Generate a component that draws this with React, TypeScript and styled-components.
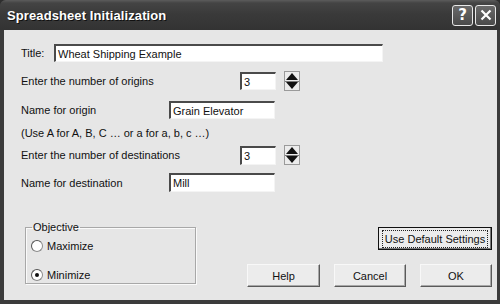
import React from 'react'
import styled, { createGlobalStyle } from 'styled-components'

const Global = createGlobalStyle`
	html, body {
		margin: 0;
		padding: 0;
		background: #2e2e2e;
	}
	* {
		box-sizing: border-box;
	}
`

const Frame = styled.div`
	width: 500px;
	height: 304px;
	display: flex;
	flex-direction: column;
	background: #3b3b3b;
	border-radius: 6px 6px 0 0;
	overflow: hidden;
	font-family: 'Liberation Sans', Arial, sans-serif;
	font-size: 11px;
	color: #111;
`

const TitleBar = styled.div`
	height: 30px;
	display: flex;
	align-items: center;
	padding: 0 4px 0 7px;
	background: linear-gradient(#5c5c5c 0px, #444 3px, #3a3a3a 14px, #333 30px);
`

const TitleText = styled.div`
	flex: 1;
	color: #fff;
	font-family: 'Liberation Sans', Arial, sans-serif;
	font-weight: bold;
	font-size: 13px;
	letter-spacing: 0.1px;
	text-shadow: 1px 1px 0 #111;
`

const CaptionButton = styled.div`
	width: 21px;
	height: 21px;
	margin-left: 2px;
	display: flex;
	align-items: center;
	justify-content: center;
	border: 1px solid #e8e8e8;
	border-radius: 3px;
	background: linear-gradient(#6a6a6a, #4a4a4a);
	color: #fff;
	font-family: 'DejaVu Sans', sans-serif;
	font-size: 15px;
	font-weight: bold;
`

const Client = styled.div`
	flex: 1;
	margin: 0 3px 4px 4px;
	background: #e6e6e6;
	padding: 14px 0 0 17px;
	display: flex;
	flex-direction: column;
`

const Row = styled.div<{ $top: number }>`
	display: flex;
	align-items: center;
	margin-top: ${p => p.$top}px;
`

const Label = styled.div<{ $w?: number }>`
	width: ${p => (p.$w ? `${p.$w}px` : 'auto')};
	white-space: nowrap;
`

const TextBox = styled.div<{ $w: number; $h?: number }>`
	width: ${p => p.$w}px;
	height: ${p => p.$h ?? 18}px;
	background: #fff;
	border-top: 2px solid #4a4a4a;
	border-left: 2px solid #4a4a4a;
	border-right: 1px solid #f4f4f4;
	border-bottom: 1px solid #f4f4f4;
	padding-left: 2px;
	display: flex;
	align-items: center;
	white-space: nowrap;
`

const Spin = styled.div`
	width: 16px;
	height: 20px;
	margin-left: 8px;
	display: flex;
	flex-direction: column;
	border: 1px solid #9a9a9a;
	background: #ececec;
`

const SpinHalf = styled.div<{ $down?: boolean }>`
	flex: 1;
	display: flex;
	align-items: center;
	justify-content: center;
	border-top: ${p => (p.$down ? '1px solid #7a7a7a' : 'none')};
`

const Bottom = styled.div`
	display: flex;
	align-items: flex-start;
	margin-top: 35px;
`

const Group = styled.fieldset`
	margin: -6px 0 0 4px;
	width: 171px;
	height: 63px;
	padding: 0 0 0 5px;
	border: 1px solid #a8a8a8;
	box-shadow: inset 1px 1px 0 #fafafa, 1px 1px 0 #fafafa;
	display: flex;
	flex-direction: column;
`

const Legend = styled.legend`
	padding: 0 1px;
	margin-left: 1px;
	line-height: 12px;
`

const Radio = styled.label`
	display: flex;
	align-items: center;
	height: 16px;
	margin-top: 5px;
	&:last-child {
		margin-top: 13px;
	}
`

const RadioDot = styled.span<{ $on?: boolean }>`
	width: 12px;
	height: 12px;
	border-radius: 50%;
	margin-right: 4px;
	background: #fff;
	border: 1px solid #8c8c8c;
	border-top-color: #555;
	border-left-color: #555;
	display: flex;
	align-items: center;
	justify-content: center;
	&::after {
		content: '';
		width: 4px;
		height: 4px;
		border-radius: 50%;
		background: ${p => (p.$on ? '#111' : 'transparent')};
	}
`

const Actions = styled.div`
	flex: 1;
	display: flex;
	flex-direction: column;
	align-items: flex-end;
	padding-right: 5px;
`

const ButtonRow = styled.div`
	display: flex;
	gap: 14px;
	margin-top: 14px;
`

const Button = styled.div<{ $w: number; $default?: boolean }>`
	width: ${p => p.$w}px;
	height: 23px;
	display: flex;
	align-items: center;
	justify-content: center;
	background: #ececec;
	border: 1px solid ${p => (p.$default ? '#111' : '#f8f8f8')};
	border-right-color: ${p => (p.$default ? '#111' : '#5a5a5a')};
	border-bottom-color: ${p => (p.$default ? '#111' : '#5a5a5a')};
	box-shadow: ${p => (p.$default ? 'inset -1px -1px 0 #777' : 'inset -1px -1px 0 #a8a8a8')};
	white-space: nowrap;
`

const Focus = styled.span`
	padding: 2px 2px;
	outline: 1px dotted #222;
	outline-offset: 0;
`

const Arrow: React.FC<{ down?: boolean }> = ({ down }) => (
	<svg width="12" height="7" viewBox="0 0 12 7">
		<polygon points={down ? '0,0 12,0 6,7' : '0,7 12,7 6,0'} fill="#111" />
	</svg>
)

const Spinner: React.FC = () => (
	<Spin>
		<SpinHalf>
			<Arrow />
		</SpinHalf>
		<SpinHalf $down>
			<Arrow down />
		</SpinHalf>
	</Spin>
)

export default function App() {
	return (
		<>
			<Global />
			<Frame>
				<TitleBar>
					<TitleText>Spreadsheet Initialization</TitleText>
					<CaptionButton>?</CaptionButton>
					<CaptionButton>
						<svg width="12" height="12" viewBox="0 0 12 12">
							<path d="M1.5 1.5 L10.5 10.5 M10.5 1.5 L1.5 10.5" stroke="#fff" strokeWidth="2.2" />
						</svg>
					</CaptionButton>
				</TitleBar>
				<Client>
					<Row $top={0}>
						<Label $w={33}>Title:</Label>
						<TextBox $w={329}>Wheat Shipping Example</TextBox>
					</Row>
					<Row $top={9}>
						<Label $w={219}>Enter the number of origins</Label>
						<TextBox $w={36}>3</TextBox>
						<Spinner />
					</Row>
					<Row $top={10}>
						<Label $w={148}>Name for origin</Label>
						<TextBox $w={106}>Grain Elevator</TextBox>
					</Row>
					<Row $top={8}>
						<Label>(Use A for A, B, C … or a for a, b, c …)</Label>
					</Row>
					<Row $top={6}>
						<Label $w={219}>Enter the number of destinations</Label>
						<TextBox $w={36} $h={19}>3</TextBox>
						<Spinner />
					</Row>
					<Row $top={8}>
						<Label $w={148}>Name for destination</Label>
						<TextBox $w={106} $h={19}>Mill</TextBox>
					</Row>
					<Bottom>
						<Group>
							<Legend>Objective</Legend>
							<Radio>
								<RadioDot />
								Maximize
							</Radio>
							<Radio>
								<RadioDot $on />
								Minimize
							</Radio>
						</Group>
						<Actions>
							<Button $w={114} $default>
								<Focus>Use Default Settings</Focus>
							</Button>
							<ButtonRow>
								<Button $w={73}>Help</Button>
								<Button $w={72}>Cancel</Button>
								<Button $w={72}>OK</Button>
							</ButtonRow>
						</Actions>
					</Bottom>
				</Client>
			</Frame>
		</>
	)
}
